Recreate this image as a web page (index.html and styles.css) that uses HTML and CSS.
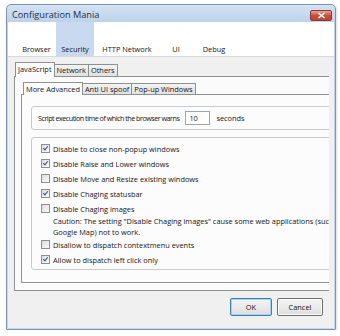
FILE: index.html
```html
<!DOCTYPE html>
<html lang="en">
<head>
    <meta charset="UTF-8">
    <title>Configuration Mania</title>
    <link rel="stylesheet" href="styles.css">
</head>
<body>

<div class="window">
    <div class="titlebar">
        <span class="title">Configuration Mania</span>
        <span class="close">
            <svg width="9" height="7" viewBox="0 0 9 7"><path d="M1.5 1 L7.5 6 M7.5 1 L1.5 6" stroke="#fff" stroke-width="1.6"/></svg>
        </span>
    </div>
    <div class="client">
        <div class="toolbar">
            <div class="tool tool-browser">Browser</div>
            <div class="tool tool-security active">Security</div>
            <div class="tool tool-http">HTTP Network</div>
            <div class="tool tool-ui">UI</div>
            <div class="tool tool-debug">Debug</div>
        </div>
        <div class="dlg-body">
            <div class="clip">
                <div class="tabs outer-tabs">
                    <div class="tab selected">JavaScript</div>
                    <div class="tab">Network</div>
                    <div class="tab">Others</div>
                </div>
                <div class="pane outer-pane">
                    <div class="tabs inner-tabs">
                        <div class="tab selected">More Advanced</div>
                        <div class="tab">Anti UI spoof</div>
                        <div class="tab">Pop-up Windows</div>
                    </div>
                    <div class="pane inner-pane">
                        <div class="group script-row">
                            <span class="script-label">Script execution time of which the browser warns</span>
                            <span class="field">10</span>
                            <span>seconds</span>
                        </div>
                        <div class="group options">
                            <div class="opt"><span class="check on"></span>Disable to close non-popup windows</div>
                            <div class="opt"><span class="check on"></span>Disable Raise and Lower windows</div>
                            <div class="opt"><span class="check"></span>Disable Move and Resize existing windows</div>
                            <div class="opt"><span class="check on"></span>Disable Chaging statusbar</div>
                            <div class="opt"><span class="check"></span>Disable Chaging images</div>
                            <div class="caution">Caution: The setting "Disable Chaging images" cause some web applications (such as<br>Google Map) not to work.</div>
                            <div class="opt"><span class="check"></span>Disallow to dispatch contextmenu events</div>
                            <div class="opt"><span class="check on"></span>Allow to dispatch left click only</div>
                        </div>
                    </div>
                </div>
            </div>
            <div class="buttons">
                <div class="btn default">OK</div>
                <div class="btn">Cancel</div>
            </div>
        </div>
    </div>
</div>

</body>
</html>
```

FILE: styles.css
```css
body {
    margin: 0;
    background: #fff;
    font-family: "Open Sans", "Noto Sans", sans-serif;
    font-size: 7.4px;
    color: #151515;
}

.window {
    margin: 4px 0 0 6px;
    width: 326px;
    height: 323px;
    padding: 0 1px 1px 1px;
    border: 1px solid #7d95b3;
    border-radius: 5px 5px 1px 1px;
    background: linear-gradient(#d3e2f4, #bcd1ea 18px, #c5d8ee);
    box-shadow: 1px 1px 3px rgba(0, 0, 0, 0.15);
}

.titlebar {
    height: 17px;
    display: flex;
    justify-content: space-between;
    align-items: flex-start;
}

.title {
    margin: 3px 0 0 4px;
    font-size: 9.2px;
    color: #1c2f4a;
}

.close {
    margin: 5px 2px 0 0;
    width: 20px;
    height: 9px;
    border: 1px solid #8a3a33;
    border-radius: 2px;
    background: linear-gradient(#e8a493, #c9503e 50%, #c14330);
    display: flex;
    align-items: center;
    justify-content: center;
}

.client {
    background: #f0f0f0;
    height: 306px;
}

.toolbar {
    height: 34px;
    background: #fff;
    border-bottom: 1px solid #d9d9d9;
    display: flex;
    padding-left: 9px;
}

.tool {
    display: flex;
    align-items: flex-end;
    justify-content: center;
    padding-bottom: 1px;
    line-height: 11px;
    box-sizing: border-box;
}

.tool-browser { width: 39px; }
.tool-security { width: 38px; }
.tool-http { width: 66px; }
.tool-ui { width: 32px; }
.tool-debug { width: 44px; }

.tool.active {
    background: #c8d9f0;
}

.dlg-body {
    padding: 5px 5px 0 6px;
}

.clip {
    overflow: hidden;
}

.tabs {
    display: flex;
    align-items: flex-end;
    position: relative;
    z-index: 1;
}

.tab {
    height: 12px;
    line-height: 11px;
    padding: 0 2px;
    border: 1px solid #8f9090;
    border-bottom: none;
    box-sizing: border-box;
    background: linear-gradient(#f3f3f3, #e1e1e1);
    margin-left: -1px;
    white-space: nowrap;
}

.tab.selected {
    height: 15px;
    padding-top: 1px;
    background: #fcfcfc;
    margin-bottom: -1px;
}

.outer-tabs {
    padding-left: 2px;
}

.inner-tabs {
    padding-left: 3px;
}

.inner-tabs .tab {
    height: 11px;
    line-height: 10px;
}

.inner-tabs .tab.selected {
    height: 13px;
}

.pane {
    border: 1px solid #8f9090;
    box-sizing: border-box;
}

.outer-pane {
    width: 340px;
    background: #fbfbfb;
    padding: 5px 0 7px 6px;
}

.inner-pane {
    background: #fcfcfc;
    padding: 11px 0 12px 9px;
}

.group {
    width: 400px;
    border: 1px solid #c6cacd;
    border-radius: 3px;
    box-sizing: border-box;
}

.script-row {
    height: 24px;
    display: flex;
    align-items: center;
    padding-left: 6px;
    gap: 6px;
}

.script-label {
    font-size: 7.2px;
    letter-spacing: -0.5px;
}

.field {
    width: 25px;
    height: 14px;
    box-sizing: border-box;
    border: 1px solid #9ea4ab;
    background: #fff;
    line-height: 12px;
    padding-left: 3px;
}

.options {
    margin-top: 7px;
    height: 133px;
    padding: 3px 0 3px 9px;
}

.opt {
    height: 15px;
    display: flex;
    align-items: center;
    white-space: nowrap;
}

.check {
    width: 9px;
    height: 9px;
    margin-right: 3px;
    border: 1px solid #8e8f8f;
    box-sizing: border-box;
    background: linear-gradient(135deg, #dcdcdc, #fbfbfb);
    position: relative;
}

.check.on::after {
    content: "";
    position: absolute;
    left: 2px;
    top: 0;
    width: 2px;
    height: 4px;
    border: solid #3b4f8a;
    border-width: 0 1.5px 1.5px 0;
    transform: rotate(40deg);
}

.caution {
    padding-left: 12px;
    line-height: 10.5px;
    white-space: nowrap;
}

.buttons {
    display: flex;
    justify-content: flex-end;
    gap: 5px;
    margin-top: 7px;
    padding-right: 6px;
}

.btn {
    width: 46px;
    height: 18px;
    box-sizing: border-box;
    border: 1px solid #707070;
    border-radius: 2px;
    background: linear-gradient(#f3f3f3, #ebebeb 50%, #dcdcdc);
    box-shadow: inset 0 0 0 1px #fafafa;
    display: flex;
    align-items: center;
    justify-content: center;
}

.btn.default {
    width: 42px;
    border-color: #3c7fb1;
    box-shadow: inset 0 0 0 1px #9fd5f5;
}
```
